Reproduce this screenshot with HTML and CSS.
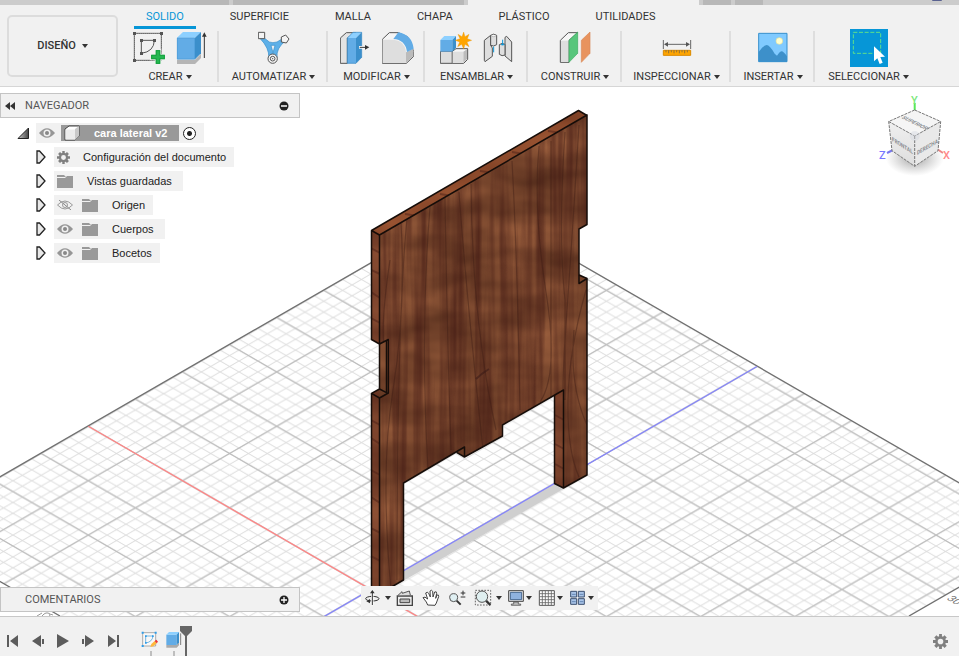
FILE: index.html
```html
<!DOCTYPE html>
<html lang="es">
<head>
<meta charset="utf-8">
<title>cara lateral v2</title>
<meta name="viewport" content="width=device-width, initial-scale=1">
<link rel="stylesheet" href="styles.css">
</head>
<body>
<header class="header">
  <div class="doc-tabs">
    <span class="doc-gap w190"></span><span class="doc-tab w39"></span><span class="doc-gap w4"></span><span class="doc-tab w231"></span><span class="doc-gap w4"></span><span class="doc-tab active w231"></span><span class="doc-gap w4"></span><span class="doc-tab w28"></span><span class="doc-gap w4"></span><span class="doc-tab w28"></span><span class="doc-gap grow"><i class="avatar"></i></span>
  </div>
  <div class="ribbon">
    <button class="workspace" type="button">DISEÑO<i class="caret"></i></button>
    <div class="ribbon-main">
      <nav class="tabs">
        <button class="tab current" type="button">SOLIDO</button>
        <button class="tab" type="button">SUPERFICIE</button>
        <button class="tab" type="button">MALLA</button>
        <button class="tab" type="button">CHAPA</button>
        <button class="tab" type="button">PLÁSTICO</button>
        <button class="tab" type="button">UTILIDADES</button>
      </nav>
      <div class="groups">
        <section class="group">
          <div class="tools">
            <button class="tool" type="button" aria-label="Crear boceto"><svg viewBox="399 93 96 102"><g fill="none" stroke="#555" stroke-width="3"><path d="M403 100V181H484V100Z" stroke-dasharray="6 0"/><path d="M424 121H463Q462 155 424 160Z"/></g><g fill="#555"><path d="M399 96h9v9h-9zM480 96h9v9h-9zM399 177h9v9h-9zM420 117h9v9h-9zM459 117h9v9h-9zM420 156h9v9h-9z"/></g><path d="M467 150h14v14h14v14h-14v14h-14v-14h-14v-14h14z" fill="#22b14c" stroke="#f1f1f1" stroke-width="6" paint-order="stroke"/><path d="M469 152h10v14h14v10h-14v14h-10v-14h-14v-10h14z" fill="#24b750" stroke="#149a3b" stroke-width="2"/></svg></button>
            <button class="tool" type="button" aria-label="Extruir"><svg viewBox="525 93 96 102"><path d="M531 179H585L603 161V174L585 192H531Z" fill="#b5b5b5"/><path d="M531 113H585V178H531Z" fill="#62ace6"/><path d="M531 113L549 96H603L585 113Z" fill="#8dd0ff"/><path d="M585 113L603 96V160L585 178Z" fill="#3b8fcb"/><path d="M532 114H584V177H532Z" fill="none" stroke="#4a9bd8" stroke-width="2"/><path d="M613 174V104" stroke="#333" stroke-width="3"/><path d="M606 110L613 97L620 110Z" fill="#333"/></svg></button>
          </div>
          <button class="menu" type="button">CREAR<i class="caret"></i></button>
        </section>
        <section class="group">
          <div class="tools">
            <button class="tool" type="button" aria-label="Automatizar"><svg viewBox="771 93 96 102"><path d="M781 107L805 126Q815 130 828 126L849 113L853 123Q825 145 828 173H803Q806 145 776 114Z" fill="#5eb0e8" stroke="#338dca" stroke-width="2"/><path d="M810 136H822L816 158Z" fill="#f1f1f1" stroke="#338dca" stroke-width="2"/><g fill="#f4f4f4" stroke="#555" stroke-width="3"><path d="M772 97H791V116H772Z"/><path d="M841 111L854 105L864 117L856 129L841 126Z"/><circle cx="815" cy="176" r="14"/><circle cx="815" cy="176" r="7"/></g><circle cx="815" cy="176" r="2" fill="#555"/></svg></button>
          </div>
          <button class="menu" type="button">AUTOMATIZAR<i class="caret"></i></button>
        </section>
        <section class="group">
          <div class="tools">
            <button class="tool" type="button" aria-label="Pulsar o tirar"><svg viewBox="60 93 96 102"><path d="M61 114L79 98H107L82 114V190H61Z" fill="#e3e3e3" stroke="#555" stroke-width="3"/><path d="M82 114H108V190H82Z" fill="#62ace6"/><path d="M82 114L99 97H125L108 114Z" fill="#8dd0ff"/><path d="M108 114L125 97V172L108 190Z" fill="#3b8fcb"/><path d="M82 114L99 97H125V172L108 190H82Z" fill="none" stroke="#3386c4" stroke-width="2"/><path d="M117 142H137" stroke="#fff" stroke-width="8"/><path d="M119 142H138" stroke="#333" stroke-width="3"/><path d="M135 135L148 142L135 149Z" fill="#333"/></svg></button>
            <button class="tool" type="button" aria-label="Empalme"><svg viewBox="186 93 96 102"><path d="M187 118L208 98H235L262 110L281 154V169L259 190H187Z" fill="#f5f5f5" stroke="#555" stroke-width="3"/><path d="M188 119H222Q254 122 258 155V189H188Z" fill="#dedede"/><path d="M258 157L280 146V168L258 189Z" fill="#bbb"/><path d="M220 117L235 97Q276 104 281 146L261 156Q256 119 220 117Z" fill="#62ace6"/></svg></button>
          </div>
          <button class="menu" type="button">MODIFICAR<i class="caret"></i></button>
        </section>
        <section class="group">
          <div class="tools">
            <button class="tool" type="button" aria-label="Nuevo componente"><svg viewBox="357 93 96 102"><path d="M358 154H394V190H358Z" fill="#dedede" stroke="#555" stroke-width="3"/><path d="M394 154L405 146H440V178L428 190H394Z" fill="#f6f6f6" stroke="#555" stroke-width="3"/><path d="M395 155H426V189H395Z" fill="#dedede"/><path d="M427 155L438 148V177L427 188Z" fill="#bcbcbc"/><path d="M358 120H394V155H358Z" fill="#62ace6"/><path d="M358 120L370 108H405L394 120Z" fill="#8dd0ff"/><path d="M394 120L405 108V143L394 155Z" fill="#3b8fcb"/><path d="M428 96L432 110L444 103L439 116L452 121L438 126L444 140L432 133L428 147L422 133L410 140L416 126L403 121L417 116L411 103L423 110Z" fill="#ffa500" stroke="#e79300" stroke-width="1"/></svg></button>
            <button class="tool" type="button" aria-label="Unión"><svg viewBox="486 93 96 102"><g stroke="#555" stroke-width="3" fill="#dedede"><path d="M493 121L512 106V136L517 144V169L495 185L493 181Z"/><path d="M512 106Q521 99 530 106V134Q521 141 512 136Z"/><path d="M555 112L560 109L575 126V185L555 168Z"/><path d="M538 134Q546 127 555 133V165Q546 170 538 163Z"/></g><ellipse cx="521" cy="107" rx="7" ry="3" fill="#fff" stroke="#666"/><path d="M521 140V157M548 119V136M543 134h10" stroke="#0896d8" stroke-width="3"/></svg></button>
          </div>
          <button class="menu" type="button">ENSAMBLAR<i class="caret"></i></button>
        </section>
        <section class="group">
          <div class="tools">
            <button class="tool" type="button" aria-label="Plano de desfase"><svg viewBox="717 93 96 102"><path d="M721 121L745 98H773L747 121V187H721Z" fill="#f6f6f6" stroke="#555" stroke-width="3"/><path d="M723 122H745V186H723Z" fill="#dedede"/><path d="M747 121L773 96V160L747 187Z" fill="#58c67c" stroke="#39aa5e" stroke-width="2"/><path d="M784 121L810 96V160L784 187Z" fill="#e8935e" stroke="#d98a58" stroke-width="2"/></svg></button>
          </div>
          <button class="menu" type="button">CONSTRUIR<i class="caret"></i></button>
        </section>
        <section class="group">
          <div class="tools">
            <button class="tool" type="button" aria-label="Medir"><svg viewBox="90 93 96 102"><path d="M97 120V147M179 120V147M104 133H172" stroke="#666" stroke-width="3"/><path d="M99 133L111 126V140ZM177 133L165 126V140Z" fill="#555"/><path d="M97 151H179V166H97Z" fill="#ffa500" stroke="#d98a00" stroke-width="3"/><path d="M105 151v6M113 151v9M121 151v6M129 151v9M137 151v6M145 151v9M153 151v6M161 151v9M169 151v6" stroke="#555" stroke-width="2"/></svg></button>
          </div>
          <button class="menu" type="button">INSPECCIONAR<i class="caret"></i></button>
        </section>
        <section class="group">
          <div class="tools">
            <button class="tool" type="button" aria-label="Insertar imagen"><svg viewBox="380 93 96 102"><path d="M385 100H470V185H385Z" fill="#80caff"/><path d="M385 156Q400 135 409 135Q418 135 433 161L440 167Q449 154 454 154Q459 154 470 169V185H385Z" fill="#3d90ca"/><circle cx="447" cy="123" r="10" fill="#ffffd0" stroke="#e4df9b" stroke-width="2"/><path d="M385 100H470V185H385Z" fill="none" stroke="#3790cc" stroke-width="3"/></svg></button>
          </div>
          <button class="menu" type="button">INSERTAR<i class="caret"></i></button>
        </section>
        <section class="group">
          <div class="tools">
            <button class="tool selected" type="button" aria-label="Seleccionar"><svg viewBox="660 87 114 114"><path d="M670 97H752V160H670Z" fill="none" stroke="#5fe08a" stroke-width="3" stroke-dasharray="12 5"/><path d="M732 139V184L742 175L749 192L758 188L751 171L765 170Z" fill="#fff"/></svg></button>
          </div>
          <button class="menu" type="button">SELECCIONAR<i class="caret"></i></button>
        </section>
      </div>
    </div>
  </div>
</header>

<main class="stage">
  <svg class="scene" viewBox="0 87 959 529" preserveAspectRatio="xMidYMid slice" aria-label="Modelo 3D">
    <defs>
      <pattern id="minor" patternUnits="userSpaceOnUse" x="88.3" y="426.3" width="18.84" height="10.88"><path d="M0 0L18.84 10.88M0 10.88L18.84 0" stroke="#dcdcdc" stroke-width="1"/></pattern>
      <pattern id="major" patternUnits="userSpaceOnUse" x="88.3" y="426.3" width="94.2" height="54.4"><path d="M0 0L94.2 54.4M0 54.4L94.2 0" stroke="#b4b4b4" stroke-opacity=".8" stroke-width="1.2"/></pattern>
      <filter id="wood" x="0" y="0" width="100%" height="100%" color-interpolation-filters="sRGB">
        <feTurbulence type="fractalNoise" baseFrequency=".014 .032" numOctaves="3" seed="8"/>
        <feColorMatrix values=".34 0 0 0 .3  .24 0 0 0 .155  .16 0 0 0 .095  0 0 0 0 1"/>
      </filter>
      <filter id="grain" x="0" y="0" width="100%" height="100%" color-interpolation-filters="sRGB">
        <feTurbulence type="fractalNoise" baseFrequency=".11 .004" numOctaves="3" seed="21"/>
        <feColorMatrix values="0 0 0 0 .25  0 0 0 0 .09  0 0 0 0 .07  1.5 0 0 0 -.55"/>
      </filter>
      <clipPath id="front"><path id="front-shape" d="M379.5 235L587 115V224.5L579 229V283.500L587 278.500V475L563.500 488V390L502.500 425V436L464.500 457V447L403.500 483V580L379.500 594V398L388.300 393V339.500L379.500 344Z"/></clipPath>
      <clipPath id="sides"><path d="M371.500 230.500L578.500 110.500L587 115.500L379.500 235V344L371.500 339.500ZM379.500 344L388.300 339.500V393L379.500 389ZM371.500 393.300L379.500 389L388 393.300L379.500 398V594L371.500 590ZM554.500 395L563.500 390V488L554.500 483.500ZM456.500 452.300L464.500 447V457ZM579 275L587 278.500L579 283.500Z"/></clipPath>
    </defs>
    <path d="M-60 511.300L474.600 203L1100 564V700H-60Z" fill="url(#minor)"/>
    <path d="M-60 511.300L474.600 203L1100 564V700H-60Z" fill="url(#major)"/>
    <path d="M-20 570L60 616V700H-20ZM1000 563.500L909 616V700H1100V564Z" fill="#fff"/>
    <path d="M-60 511.300L474.600 203L1013 513.800M-20 570L60 616M909 616L1000 563.500" fill="none" stroke="#707070" stroke-width="1.300"/>
    <g class="grid-label"><text transform="matrix(.87 .5 -.87 .5 946 599)">30</text></g>
    <path d="M37 616l5-3M42 616q4-5 8-2M50 616q-2-3 3-1" fill="none" stroke="#999"/>
    <path d="M88.300 426.300L440 629.500" stroke="#ff8585" stroke-width="1.300"/>
    <path d="M403 571L555 483L565 488L403 581Z" fill="#cfcfcf"/>
    <path d="M757 366.500L310 624.700" stroke="#8585fa" stroke-width="1.300"/>
    <g clip-path="url(#sides)">
      <rect x="365" y="105" width="230" height="495" fill="#824529" filter="url(#wood)"/>
      <path d="M371 230L579 110L588 116L380 236Z" fill="#a74d29" opacity=".4"/>
      <path d="M371 230V600H379V235ZM554 390V490H564V390Z" fill="#722f20" opacity=".3"/>
      <path d="M371 248l9 5M371 270l9 4M371 292l9 6M371 318l9 5M371 420l9 5M371 438l9 6M371 470l9 5M371 497l9 6M371 528l9 5M371 556l9 5M555 415l9 5M555 444l9 5M555 464l9 5M405 214l20 3M440 194l18 3M480 171l20 3M512 152l18 3M548 131l20 3" stroke="#4c2118" stroke-width="2" opacity=".5"/>
    </g>
    <g clip-path="url(#front)">
      <rect x="365" y="105" width="230" height="495" fill="#7b452b" filter="url(#wood)"/>
      <rect x="365" y="105" width="230" height="495" filter="url(#grain)"/>
      <g fill="none" stroke="#3d1c15" stroke-width="1.200" opacity=".4"><path d="M401 222Q406 310 393 390T391 590M407 219Q397 320 397 580M459 192Q466 290 483 450M471 184Q472 320 496 430M512 161Q517 250 520 410M539 146Q533 210 546 292T540 402M565 132Q558 235 565 300V400M579 125Q573 225 567 310T564 400M586 290Q569 350 568 400T579 477M574 330Q569 385 587 425M430 207Q420 330 428 470M445 198Q447 330 451 450M390 260Q381 320 384 345M551 141V400"/></g>
      <path d="M476 379q6-6 13-10" stroke="#3c1c18" stroke-width="2" opacity=".6"/>
    </g>
    <g fill="none" stroke="#160d09" stroke-width="1.500" stroke-linejoin="round"><use href="#front-shape"/><path d="M379.500 235L371.500 230.500L578.500 110.500L587 115.500M371.500 230.500V339.500L379.500 344V389M371.500 590V393.300L379.500 389L388 393.300M371.500 393.300L379.500 398M371.500 590L379.500 594M554.500 395V483.500L563.500 488M456.500 452.300L464.500 457M579 275L587 278.500M386.500 341V392"/></g>
  </svg>

  <svg class="viewcube" viewBox="870 90 89 90" aria-label="Cubo de vistas">
    <defs><radialGradient id="cubeshade"><stop stop-color="#777" stop-opacity=".7"/><stop offset="1" stop-color="#999" stop-opacity="0"/></radialGradient><linearGradient id="cubeface" x2="0" y2="1"><stop stop-color="#f4f4f4"/><stop offset="1" stop-color="#dedede"/></linearGradient></defs>
    <ellipse cx="914.700" cy="158" rx="29" ry="18" fill="url(#cubeshade)"/>
    <path d="M914.700 110V103" stroke="#58e858" stroke-width="2"/><path d="M893 150L887 153" stroke="#7777ee" stroke-width="2"/><path d="M937 149L943 153" stroke="#e88" stroke-width="2"/>
    <path d="M914.700 110L940.700 121.500L938 150.700L914.700 166.300L892 150.700L888.700 121.500Z" fill="url(#cubeface)"/>
    <path d="M914.700 110L940.700 121.500L914.700 136L888.700 121.500Z" fill="#f5f5f5"/>
    <path d="M914.700 136L940.700 121.500L938 150.700L914.700 166.300Z" fill="#e9e9e9"/>
    <path d="M914.700 110L940.700 121.500L938 150.700L914.700 166.300L892 150.700L888.700 121.500ZM888.700 121.500L914.700 136L940.700 121.500M914.700 136V166.300" fill="none" stroke="#777" stroke-width="1" stroke-dasharray="3 1"/>
    <circle cx="914.700" cy="136" r="5" fill="#cfd5df" opacity=".4"/>
    <g class="cube-label"><text transform="matrix(.87 .42 -.87 .5 901 118)">SUPERIOR</text><text transform="matrix(.8 .5 .05 1 892 141)">FRONTAL</text><text transform="matrix(.78 -.45 0 1 917 155)">DERECHA</text></g>
    <g class="axis-label"><text class="axis-y" x="911" y="104">Y</text><text class="axis-z" x="879" y="159">Z</text><text class="axis-x" x="943" y="159">X</text></g>
  </svg>

  <section class="browser">
    <div class="panel-head">
      <svg class="rewind" viewBox="0 0 10 8"><path d="M5 0V8L0 4ZM10 0V8L5 4Z" fill="#333"/></svg>
      <h2>NAVEGADOR</h2>
      <button class="round" type="button" aria-label="Minimizar"><svg viewBox="0 0 10 10"><circle cx="5" cy="5" r="4.500" fill="#222"/><path d="M2 5H8" stroke="#fff" stroke-width="1.500"/></svg></button>
    </div>
    <ul class="tree">
      <li class="row root">
        <svg class="arrow" viewBox="0 0 12 12"><defs><linearGradient id="dark"><stop stop-color="#ccc"/><stop offset="1" stop-color="#444"/></linearGradient></defs><path d="M1 11.500L11.500 1V11.500Z" fill="url(#dark)" stroke="#222"/></svg>
        <div class="item"><svg class="eye"><use href="#eye"/></svg><span class="selection"><svg class="body-icon" viewBox="0 0 16 16"><path d="M1 4L5 1H15V11L11 15H1Z" fill="#fff" stroke="#444"/><path d="M11 4L15 1V11L11 15Z" fill="#c9c9c9"/><path d="M1.500 4.500H11V14.500H1.500Z" fill="#ececec"/></svg>cara lateral v2</span><input class="activate" type="radio" checked aria-label="Activar componente"></div>
      </li>
      <li class="row"><svg class="arrow"><use href="#closed"/></svg><div class="item"><svg class="cog"><use href="#gear"/></svg><span class="after-cog">Configuración del documento</span></div></li>
      <li class="row"><svg class="arrow"><use href="#closed"/></svg><div class="item wide"><svg class="folder"><use href="#folder"/></svg><span>Vistas guardadas</span></div></li>
      <li class="row"><svg class="arrow"><use href="#closed"/></svg><div class="item"><svg class="eye"><use href="#eye-off"/></svg><svg class="folder"><use href="#folder"/></svg><span>Origen</span></div></li>
      <li class="row"><svg class="arrow"><use href="#closed"/></svg><div class="item wide"><svg class="eye"><use href="#eye"/></svg><svg class="folder"><use href="#folder"/></svg><span>Cuerpos</span></div></li>
      <li class="row"><svg class="arrow"><use href="#closed"/></svg><div class="item"><svg class="eye"><use href="#eye"/></svg><svg class="folder"><use href="#folder"/></svg><span>Bocetos</span></div></li>
    </ul>
  </section>

  <section class="comments panel-head">
    <h2>COMENTARIOS</h2>
    <button class="round" type="button" aria-label="Añadir comentario"><svg viewBox="0 0 10 10"><circle cx="5" cy="5" r="4.500" fill="#222"/><path d="M2 5H8M5 2V8" stroke="#fff" stroke-width="1.300"/></svg></button>
  </section>

  <div class="viewbar">
    <button type="button" aria-label="Órbita"><svg viewBox="69 27 54 54"><ellipse cx="97" cy="56" rx="20" ry="7" fill="none" stroke="#333" stroke-width="3"/><path d="M97 34V76" stroke="#fff" stroke-width="7"/><path d="M97 36V75" stroke="#333" stroke-width="3"/><path d="M90 40L97 30L104 40M90 57L79 64L90 70Z" fill="#333"/></svg><i class="caret"></i></button>
    <div class="view-set">
      <button type="button" aria-label="Mirar a"><svg viewBox="168 27 54 54"><path d="M172 48H217V76H172Z" fill="#eee" stroke="#444" stroke-width="4"/><path d="M180 57H209V68H180Z" fill="#bbb" stroke="#444" stroke-width="3"/><path d="M174 46L186 35L187 40L208 33L211 45" fill="#ddd" stroke="#555" stroke-width="3"/></svg></button>
      <button type="button" aria-label="Encuadre"><svg viewBox="246 27 54 54"><path d="M263 75L259 66L249 53Q254 48 263 57L257 39Q262 34 266 40L271 51L270 33Q275 28 278 34L279 51L284 36Q290 33 290 40L287 55L291 45Q297 43 296 50L289 69L285 76Z" fill="#fff" stroke="#444" stroke-width="3"/></svg></button>
      <button type="button" aria-label="Zoom"><svg viewBox="324 27 54 54"><path d="M350 62L362 74" stroke="#333" stroke-width="6"/><circle cx="341" cy="53" r="12" fill="#e0f0f3" stroke="#555" stroke-width="3"/><path d="M362 39H376M369 32V46M362 51H376" stroke="#333" stroke-width="3"/></svg></button>
      <button type="button" aria-label="Ajustar"><svg viewBox="402 27 54 54"><path d="M406 31H452V75H406Z" fill="none" stroke="#666" stroke-width="3" stroke-dasharray="5 4"/><path d="M438 62L451 75" stroke="#333" stroke-width="7"/><circle cx="426" cy="50" r="17" fill="#dfeff0" stroke="#555" stroke-width="3"/></svg><i class="caret"></i></button>
    </div>
    <div class="view-set tight">
      <button type="button" aria-label="Visualización"><svg viewBox="501 27 54 54"><path d="M506 32H550V64H506Z" fill="#eee" stroke="#444" stroke-width="3"/><path d="M511 37H545V59H511Z" fill="#8fb2df" stroke="#46678f" stroke-width="3"/><path d="M521 66H535V72H542V76H514V72H521Z" fill="#bbb" stroke="#444" stroke-width="2"/></svg><i class="caret"></i></button>
      <button type="button" aria-label="Rejilla"><svg viewBox="594 27 54 54"><path d="M598 32H643V76H598Z" fill="#fff" stroke="#555" stroke-width="3"/><path d="M607 32V76M616 32V76M625 32V76M634 32V76M598 41H643M598 50H643M598 59H643M598 68H643" stroke="#666" stroke-width="2.500"/></svg><i class="caret"></i></button>
      <button type="button" aria-label="Ventanas"><svg viewBox="687 27 54 54"><g fill="#a9c4e8" stroke="#3b5070" stroke-width="3"><path d="M692 34H710V51H692ZM715 34H733V51H715ZM692 56H710V73H692ZM715 56H733V73H715Z"/></g><path d="M696 43H707M719 43H730M696 65H707M719 65H730" stroke="#6486b4" stroke-width="3"/></svg><i class="caret"></i></button>
    </div>
  </div>
</main>

<footer class="timeline">
  <div class="transport">
    <button type="button" aria-label="Inicio"><svg viewBox="0 0 14 14"><path d="M1 1h2v12H1zM12 1V13L4 7Z"/></svg></button>
    <button type="button" aria-label="Paso atrás"><svg viewBox="0 0 14 14"><path d="M10 1V13L1 7ZM11 5h2v5h-2z"/></svg></button>
    <button type="button" aria-label="Reproducir"><svg viewBox="0 0 14 14"><path d="M1 0V14L13 7Z"/></svg></button>
    <button type="button" aria-label="Paso adelante"><svg viewBox="0 0 14 14"><path d="M4 1V13L13 7ZM1 5h2v5H1z"/></svg></button>
    <button type="button" aria-label="Final"><svg viewBox="0 0 14 14"><path d="M2 1V13L10 7ZM11 1h2v12h-2z"/></svg></button>
  </div>
  <div class="features">
    <button type="button" aria-label="Boceto"><svg viewBox="423 138 54 90"><path d="M428 158H467V198H428Z" fill="#f8f8f8" stroke="#888" stroke-width="2"/><path d="M437 168H459Q457 186 437 189Z" fill="none" stroke="#3794d2" stroke-width="2"/><path d="M425 155h6v6h-6zM464 155h6v6h-6zM425 195h6v6h-6zM435 166h5v5h-5zM456 166h5v5h-5zM435 186h5v5h-5z" fill="#2c9dea"/><path d="M451 201L454 192L464 183L470 190L460 199Z" fill="#ffb83c"/><path d="M464 183L469 179L474 185L470 190Z" fill="#e33"/><path d="M450 213h6v15h-6z" fill="#bebebe"/></svg></button>
    <button type="button" aria-label="Extrusión"><svg viewBox="495 138 54 90"><path d="M499 195H530L537 187V196L530 203H499Z" fill="#aaa"/><path d="M499 164H530V195H499Z" fill="#62ace6"/><path d="M499 164L507 156H537L530 164Z" fill="#8dd0ff"/><path d="M530 164L537 156V187L530 195Z" fill="#3b8fcb"/><path d="M542 160V195" stroke="#444" stroke-width="2"/><path d="M519 213h6v15h-6z" fill="#bebebe"/></svg></button>
    <svg class="marker" viewBox="0 0 12 30"><path d="M0 0H12V5L7 10V30H5V10L0 5Z" fill="#666"/></svg>
  </div>
  <button class="settings" type="button" aria-label="Configuración"><svg><use href="#gear"/></svg></button>
</footer>

<svg class="symbols" aria-hidden="true">
  <symbol id="closed" viewBox="0 0 10 14"><path d="M1 1H3.500L9 7L3.500 13H1Z" fill="#e8e8e8" stroke="#222" stroke-width="1.300"/></symbol>
  <symbol id="eye" viewBox="0 0 16 10"><path d="M0 5Q8-4.500 16 5Q8 14.500 0 5Z" fill="#969696"/><circle cx="8" cy="5" r="3.500" fill="#f1f1f1"/><circle cx="8" cy="5" r="2" fill="#888"/></symbol>
  <symbol id="eye-off" viewBox="0 0 16 10"><path d="M.5 5Q8-3 15.500 5Q8 13 .5 5Z" fill="none" stroke="#999"/><circle cx="8" cy="5" r="2.500" fill="none" stroke="#999"/><path d="M2 0L14 10" stroke="#888"/></symbol>
  <symbol id="folder" viewBox="0 0 16 13"><path d="M0 0H7L9 2H0ZM0 3H8L10 1H16V13H0Z" fill="#999"/></symbol>
  <symbol id="gear" viewBox="0 0 16 16"><path fill-rule="evenodd" d="M6.500 0H9.500V2.400L10.600 2.900L12.300 1.200L14.700 3.600L13.100 5.300L13.600 6.500H16V9.500H13.600L13.100 10.700L14.700 12.400L12.300 14.800L10.600 13.100L9.500 13.600V16H6.500V13.600L5.400 13.100L3.700 14.800L1.300 12.400L2.900 10.700L2.400 9.500H0V6.500H2.400L2.900 5.300L1.300 3.600L3.700 1.200L5.400 2.900L6.500 2.400ZM8 5A3 3 0 1 0 8 11A3 3 0 1 0 8 5Z" fill="#808080"/></symbol>
</svg>
</body>
</html>
```
FILE: styles.css
```css
* { box-sizing: border-box; }

body {
  margin: 0;
  height: 100vh;
  display: flex;
  flex-direction: column;
  overflow: hidden;
  background: #fff;
  color: #333;
  font: 11px/16px Roboto, "Liberation Sans", sans-serif;
}

button {
  margin: 0;
  padding: 0;
  border: 0;
  background: none;
  color: inherit;
  font: inherit;
}

svg { display: block; }
.symbols { display: none; }

.caret {
  display: inline-block;
  border: 3px solid transparent;
  border-top: 4px solid #333;
  border-bottom: 0;
}

/* Document tabs */
.doc-tabs { display: flex; height: 5px; overflow: hidden; background: #ccc; }
.doc-tab { background: #b8b8b8; }
.doc-tab.active { background: #f1f1f1; }
.w4 { width: 4px; }
.w28 { width: 28px; }
.w39 { width: 39px; }
.w190 { width: 190px; }
.w231 { width: 231px; }
.grow { flex: 1; display: flex; justify-content: flex-end; padding-right: 17px; }
.avatar { width: 10px; height: 1px; border-radius: 0 0 5px 5px; background: #5a6290; }

/* Ribbon */
.ribbon {
  display: flex;
  height: 82px;
  background: #f1f1f1;
  border-bottom: 1px solid #d6d6d6;
}
.workspace {
  display: flex;
  align-items: center;
  justify-content: center;
  gap: 6px;
  width: 111px;
  height: 62px;
  margin: 10px 0 0 7px;
  border: 2px solid #dcdcdc;
  border-radius: 5px;
  font-weight: 500;
}
.ribbon-main { flex: 1; }
.tabs { display: flex; gap: 22px; height: 24px; padding-left: 16px; }
.tab { padding: 2px 12px 0; border-bottom: 3px solid transparent; }
.tab.current { color: #0696d7; border-color: #0696d7; }
.groups {
  display: grid;
  grid-template-columns: 101px 109px 97px 103px 94px 109px 84px 107px;
}
.group {
  position: relative;
  display: flex;
  flex-direction: column;
  align-items: center;
}
.group:first-child { padding-left: 3px; }
.group:not(:last-child)::after {
  content: "";
  position: absolute;
  top: 2px;
  bottom: 5px;
  right: 0;
  width: 2px;
  background: #dedede;
}
.tools { display: flex; align-items: center; gap: 10px; height: 38px; }
.tool svg { width: 32px; height: 34px; }
.tool.selected { background: #0696d7; }
.tool.selected svg { width: 38px; height: 38px; }
.menu { display: flex; align-items: center; gap: 3px; height: 20px; white-space: nowrap; }

/* Stage */
.stage { position: relative; flex: 1; min-height: 0; overflow: hidden; }
.scene { width: 100%; height: 100%; }
.grid-label { font-size: 11px; fill: #777; }
.viewcube { position: absolute; top: 3px; right: 0; width: 89px; height: 90px; }
.cube-label { font-size: 6px; font-weight: 700; fill: #8a8d92; }
.axis-label { font-size: 11px; font-weight: 500; }
.axis-x { fill: #f88; }
.axis-y { fill: #7be87b; }
.axis-z { fill: #77f; }

.browser { position: absolute; top: 6px; left: 0; width: 300px; }
.panel-head {
  display: flex;
  align-items: center;
  height: 25px;
  padding: 0 10px 0 4px;
  background: #f1f1f1;
  border: 1px solid #c4c4c4;
  color: #555;
}
.panel-head h2 { flex: 1; margin: 0; font: inherit; }
.rewind { width: 10px; height: 8px; margin-right: 10px; }
.round svg { width: 10px; height: 10px; }
.comments { position: absolute; left: 0; bottom: 4px; width: 300px; padding-left: 24px; }

.tree {
  display: flex;
  flex-direction: column;
  gap: 4px;
  margin: 0;
  padding: 5px 0 0;
  list-style: none;
  font-family: "Liberation Sans", sans-serif;
  color: #222;
}
.row { display: flex; align-items: center; height: 20px; padding-left: 36px; }
.row .arrow { width: 10px; height: 14px; margin-right: 8px; }
.root { padding-left: 17px; }
.root .arrow { width: 12px; height: 12px; margin-right: 7px; }
.item {
  display: flex;
  align-items: center;
  height: 100%;
  padding: 0 8px 0 3px;
  background: #f1f1f1;
  white-space: nowrap;
}
.item.wide { padding-right: 11px; }
.item .eye { width: 16px; height: 10px; margin-right: 9px; }
.item .folder { width: 16px; height: 13px; margin-right: 14px; }
.item .cog { width: 13px; height: 13px; margin-right: 13px; }
.root .eye { margin-right: 6px; }
.root .item .eye { margin-right: 6px; }
.selection {
  display: flex;
  align-items: center;
  gap: 14px;
  height: 16px;
  padding: 0 12px 0 3px;
  background: #999;
  color: #fff;
  font-weight: 700;
}
.body-icon { width: 16px; height: 16px; }
.activate {
  appearance: none;
  width: 13px;
  height: 13px;
  margin: 0 0 0 4px;
  border: 1px solid #222;
  border-radius: 50%;
  background: radial-gradient(#222 0 2px, #fff 3px);
}

.viewbar {
  position: absolute;
  left: 361px;
  bottom: 6px;
  display: flex;
  align-items: center;
  gap: 5px;
  height: 24px;
  padding: 0 4px 0 2px;
  background: #f1f1f1;
}
.viewbar button { display: flex; align-items: center; gap: 4px; }
.viewbar svg { width: 18px; height: 18px; }
.view-set { display: flex; gap: 8px; }
.view-set.tight { gap: 6px; }
.view-set.tight button { gap: 1px; }

/* Timeline */
.timeline {
  display: flex;
  height: 40px;
  padding: 0 11px 0 6px;
  background: #f1f1f1;
  border-top: 1px solid #c8c8c8;
}
.transport { display: flex; align-items: center; gap: 11px; padding-top: 9px; }
.transport svg { width: 14px; height: 14px; fill: #5c5c5c; }
.features { display: flex; flex: 1; gap: 6px; padding: 9px 0 0 21px; }
.features button svg { width: 18px; height: 30px; }
.features .marker { width: 12px; height: 30px; margin-left: -9px; }
.settings { padding-top: 9px; }
.settings svg { width: 15px; height: 15px; }
```
